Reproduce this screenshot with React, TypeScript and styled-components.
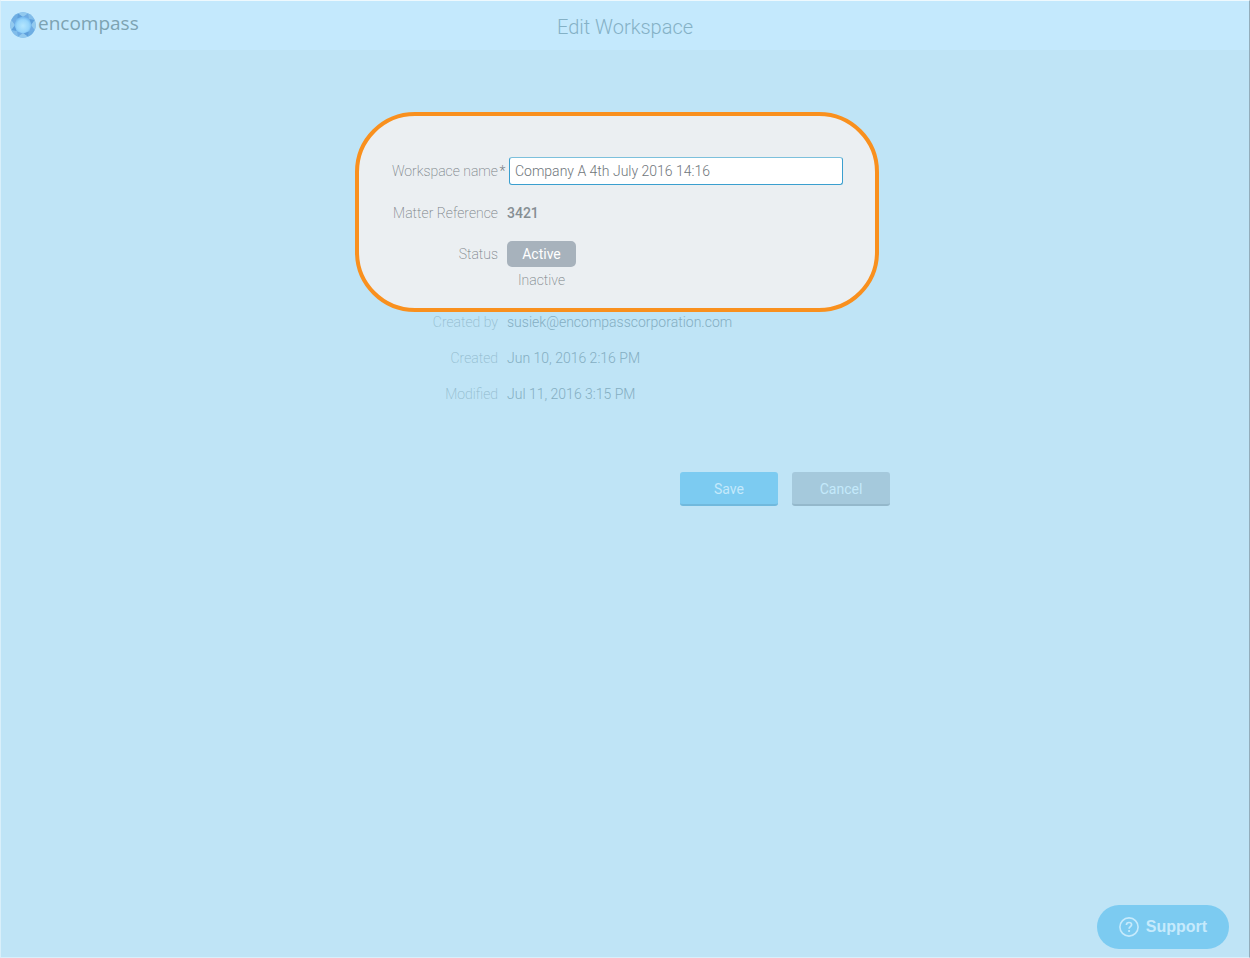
import React, { useState } from "react";
import styled, { createGlobalStyle } from "styled-components";

const GlobalStyle = createGlobalStyle`
  *, *::before, *::after { box-sizing: border-box; }
  body {
    margin: 0;
    background: #bfe4f6;
    font-family: Roboto, "Liberation Sans", sans-serif;
    font-size: 14px;
  }
  button, input { font: inherit; }
`;

const Page = styled.div`
  min-height: 100vh;
  display: flex;
  flex-direction: column;
  border: 1px solid #d9effa;
  border-top-color: #eef9fe;
  border-right-color: #93adbb;
`;

const Header = styled.header`
  display: grid;
  grid-template-columns: 1fr auto 1fr;
  height: 49px;
  padding: 0 9px;
  background: #c4e9fd;
`;

const Brand = styled.a`
  display: flex;
  align-items: center;
  justify-self: start;
  gap: 2px;
  height: 48px;
  color: #7da3b2;
  font-family: "Open Sans", "Noto Sans", sans-serif;
  font-size: 19px;
  line-height: 24px;
  text-decoration: none;
`;

const BrandName = styled.span`
  padding-bottom: 5px;
`;

const Title = styled.h1`
  margin: 0;
  color: #84b1c6;
  font-size: 20px;
  font-weight: 300;
  line-height: 52px;
`;

const Form = styled.form`
  width: 100%;
  max-width: 540px;
  margin: 62px auto 0;
`;

const Highlight = styled.section`
  display: flex;
  flex-direction: column;
  gap: 18px;
  max-width: 524px;
  padding: 41px 32px 15px 0;
  border: 4px solid #f9901e;
  border-radius: 60px;
  background: #ebeff2;
  color: #7a8287;
`;

const Details = styled.dl`
  display: flex;
  flex-direction: column;
  gap: 18px;
  margin: 0;
  padding: 1px 4px 0;
  color: #84aec2;
`;

const Row = styled.div`
  display: grid;
  grid-template-columns: 139px 9px 1fr;
  align-items: start;
`;

const NameRow = styled(Row)`
  align-items: center;
`;

const FieldLabel = styled.label`
  font-weight: 200;
  line-height: 20px;
  text-align: right;
`;

const Required = styled.span`
  font-weight: 300;
  text-align: center;
`;

const NameInput = styled.input`
  height: 28px;
  margin-left: 2px;
  padding: 0 5px;
  min-width: 0;
  border: 1px solid #3a9fcf;
  border-top-color: #7cc0dc;
  border-radius: 3px;
  outline: none;
  background: #fff;
  color: #6f767b;
  font-weight: 300;
`;

const Reference = styled.output`
  color: #868e93;
  font-weight: 500;
  line-height: 20px;
`;

const StatusRow = styled(Row)``;

const StatusLabel = styled.span`
  font-weight: 200;
  line-height: 26px;
  text-align: right;
`;

const Options = styled.div`
  grid-column: 3;
  justify-self: start;
  width: 69px;
`;

const Option = styled.label<{ $selected: boolean }>`
  display: block;
  position: relative;
  border-radius: 5px;
  background: ${(p) => (p.$selected ? "#a7b2bc" : "transparent")};
  color: ${(p) => (p.$selected ? "#fff" : "inherit")};
  font-weight: ${(p) => (p.$selected ? 400 : 200)};
  line-height: 26px;
  text-align: center;
  cursor: pointer;
`;

const OptionInput = styled.input`
  position: absolute;
  inset: 0;
  width: 100%;
  height: 100%;
  margin: 0;
  opacity: 0;
  cursor: pointer;
`;

const Term = styled.dt`
  color: #8fb9cc;
  font-weight: 200;
  line-height: 18px;
  text-align: right;
`;

const Value = styled.dd`
  grid-column: 3;
  margin: 0;
  font-weight: 300;
  line-height: 18px;
`;

const Actions = styled.div`
  display: flex;
  justify-content: flex-end;
  gap: 14px;
  margin-top: 69px;
  padding-right: 5px;
`;

const Button = styled.button<{ $primary?: boolean }>`
  width: 98px;
  height: 34px;
  padding: 2px 0 0;
  border: 0;
  border-bottom: 2px solid ${(p) => (p.$primary ? "#70b9dd" : "#94b8cb")};
  border-radius: 3px;
  background: ${(p) => (p.$primary ? "#7ccbf1" : "#a5c9dc")};
  color: #c4e9fb;
  cursor: pointer;
`;

const Footer = styled.footer`
  display: flex;
  justify-content: flex-end;
  margin-top: auto;
  padding: 24px 20px 8px;
`;

const SupportButton = styled.button`
  display: flex;
  align-items: center;
  justify-content: center;
  gap: 7px;
  width: 132px;
  height: 44px;
  padding: 0;
  border: 0;
  border-radius: 22px;
  background: #7ccbf1;
  color: #c6eafc;
  font-family: "Liberation Sans", sans-serif;
  font-size: 16px;
  font-weight: 700;
  cursor: pointer;
`;

const Gem = () => (
  <svg width="26" height="26" viewBox="0 0 26 26" aria-hidden="true">
    <defs>
      <radialGradient id="gem-core" cx="50%" cy="55%" r="50%">
        <stop offset="0" stopColor="#b4e6fe" />
        <stop offset="0.7" stopColor="#96d5fb" />
        <stop offset="1" stopColor="#74b9ef" />
      </radialGradient>
    </defs>
    <circle cx="13" cy="13" r="12.8" fill="#78b8e8" />
    <path d="M8 1.500 13 .4l5 1.100L13 5zM24.500 8l1.100 5-1.100 5-3.500-5zM18 24.500l-5 1.100-5-1.100 5-3.500zM1.500 18 .4 13l1.100-5L5 13z" fill="#92c9ee" />
    <path d="m18 1.500 4 2.500 2.500 4L19 7zM8 24.500 4 22l-2.500-4L7 19z" fill="#82bdea" />
    <path d="M24.500 18 22 22l-4 2.500 1-5.500zM1.500 8 4 4l4-2.500L7 7z" fill="#6eaee3" />
    <path d="M13 5 8 1.500 7 7zM21 13l-2-6 5.500 1zM13 21l6-2-1 5.500zM5 13l2 6-5.500-1z" fill="#5e9fdb" />
    <path d="m13 5 5-3.500L19 7zM21 13l-2 6 5.500-1zM13 21l-6-2 1 5.500zM5 13l2-6-5.500 1z" fill="#6facE4" />
    <path d="m13 4.200 6.200 2.600L21.800 13l-2.600 6.200-6.200 2.600-6.200-2.600L4.200 13l2.600-6.200z" fill="url(#gem-core)" />
  </svg>
);

const HelpIcon = () => (
  <svg width="20" height="20" viewBox="0 0 20 20" fill="none" stroke="currentColor" aria-hidden="true">
    <circle cx="10" cy="10" r="9.100" strokeWidth="1.600" />
    <path d="M7.400 8.100c0-1.600 1.100-2.600 2.600-2.600s2.600.9 2.600 2.300c0 1.900-2.500 1.900-2.500 4" strokeWidth="1.700" />
    <path d="M10.100 13.100v1.800" strokeWidth="1.900" />
  </svg>
);

const details = [
  { term: "Created by", value: "susiek@encompasscorporation.com" },
  { term: "Created", value: "Jun 10, 2016 2:16 PM" },
  { term: "Modified", value: "Jul 11, 2016 3:15 PM" },
];

const statuses = ["Active", "Inactive"];

export default function App() {
  const [name, setName] = useState("Company A 4th July 2016 14:16");
  const [status, setStatus] = useState("Active");

  return (
    <>
      <GlobalStyle />
      <Page>
        <Header>
          <Brand href="#">
            <Gem />
            <BrandName>encompass</BrandName>
          </Brand>
          <Title>Edit Workspace</Title>
        </Header>
        <Form onSubmit={(e) => e.preventDefault()}>
          <Highlight>
            <NameRow>
              <FieldLabel htmlFor="workspace-name">Workspace name</FieldLabel>
              <Required>*</Required>
              <NameInput
                id="workspace-name"
                type="text"
                required
                value={name}
                onChange={(e) => setName(e.target.value)}
              />
            </NameRow>
            <Row>
              <FieldLabel htmlFor="matter-reference">Matter Reference</FieldLabel>
              <span />
              <Reference id="matter-reference">3421</Reference>
            </Row>
            <StatusRow role="radiogroup" aria-labelledby="status-label">
              <StatusLabel id="status-label">Status</StatusLabel>
              <Options>
                {statuses.map((s) => (
                  <Option key={s} $selected={s === status}>
                    <OptionInput
                      type="radio"
                      name="status"
                      value={s}
                      checked={s === status}
                      onChange={() => setStatus(s)}
                    />
                    {s}
                  </Option>
                ))}
              </Options>
            </StatusRow>
          </Highlight>
          <Details>
            {details.map((d) => (
              <Row key={d.term}>
                <Term>{d.term}</Term>
                <Value>{d.value}</Value>
              </Row>
            ))}
          </Details>
          <Actions>
            <Button type="submit" $primary>Save</Button>
            <Button type="button">Cancel</Button>
          </Actions>
        </Form>
        <Footer>
          <SupportButton type="button">
            <HelpIcon />
            Support
          </SupportButton>
        </Footer>
      </Page>
    </>
  );
}
